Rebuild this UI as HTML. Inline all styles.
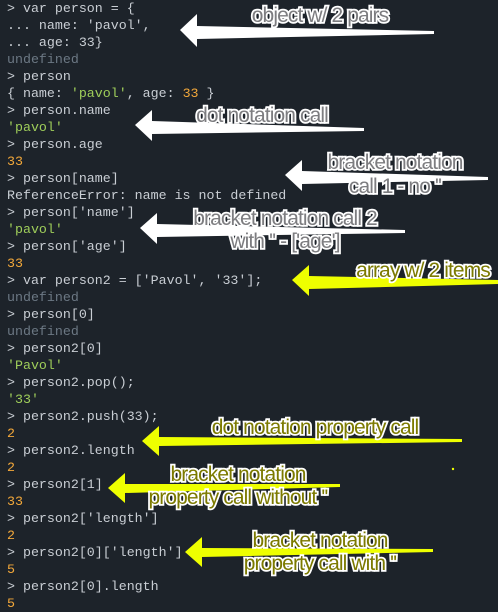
<!DOCTYPE html>
<html><head><meta charset="utf-8"><style>
html,body{margin:0;padding:0;background:#1d232a;width:498px;height:609px;overflow:hidden}
pre{margin:0;position:absolute;left:7px;top:0;font-family:"Liberation Mono",monospace;font-size:13.3px;line-height:17px;color:#c9ced4;white-space:pre}
.u{color:#6c7884}.g{color:#9fce5a}.o{color:#f3a83a}
svg{position:absolute;left:0;top:0}
.w{font-family:"Liberation Sans",sans-serif;font-size:21px;fill:#7d7d80;stroke:#fff;stroke-width:3.5px;paint-order:stroke;letter-spacing:-0.9px;text-anchor:middle}
.y{fill:#7c7a00}
</style></head><body>
<pre>&gt; var person = {
... name: 'pavol',
... age: 33}
<span class="u">undefined</span>
&gt; person
{ name: <span class="g">'pavol'</span>, age: <span class="o">33</span> }
&gt; person.name
<span class="g">'pavol'</span>
&gt; person.age
<span class="o">33</span>
&gt; person[name]
ReferenceError: name is not defined
&gt; person['name']
<span class="g">'pavol'</span>
&gt; person['age']
<span class="o">33</span>
&gt; var person2 = ['Pavol', '33'];
<span class="u">undefined</span>
&gt; person[0]
<span class="u">undefined</span>
&gt; person2[0]
<span class="g">'Pavol'</span>
&gt; person2.pop();
<span class="g">'33'</span>
&gt; person2.push(33);
<span class="o">2</span>
&gt; person2.length
<span class="o">2</span>
&gt; person2[1]
<span class="o">33</span>
&gt; person2['length']
<span class="o">2</span>
&gt; person2[0]['length']
<span class="o">5</span>
&gt; person2[0].length
<span class="o">5</span></pre>
<svg width="498" height="609">
<g fill="#fff">
<polygon points="180,30 197,14 197,26 434,31 434,34 197,39 197,47"/>
<polygon points="135,125 152,110 152,121 364,128 364,131 152,134 152,141"/>
<polygon points="285,175 302,160 302,171 488,177 488,180 302,184 302,191"/>
<polygon points="140,228 157,213 157,224 405,230 405,233 157,237 157,244"/>
</g>
<g fill="#eeff00">
<polygon points="292,280 309,265 309,276 498,280 498,284 309,289 309,296"/>
<polygon points="142,441 159,426 159,437 462,439 462,442 159,446 159,456"/>
<polygon points="108,488 125,473 125,484 340,484 340,487 125,493 125,503"/>
<polygon points="185,552 202,537 202,548 433,549 433,552 202,557 202,567"/>
<circle cx="453" cy="469" r="1.2"/>
</g>
<text class="w" x="320" y="22">object w/ 2 pairs</text>
<text class="w" x="262" y="122">dot notation call</text>
<text class="w" x="395" y="169">bracket notation</text>
<text class="w" x="395" y="193">call 1 - no ''</text>
<text class="w" x="285" y="225">bracket notation call 2</text>
<text class="w" x="285" y="248">with '' - ['age']</text>
<text class="w y" x="423" y="277">array w/ 2 items</text>
<text class="w y" x="315" y="434">dot notation property call</text>
<text class="w y" x="238" y="481">bracket notation</text>
<text class="w y" x="238" y="504">property call without ''</text>
<text class="w y" x="320" y="547">bracket notation</text>
<text class="w y" x="320" y="570">property call with ''</text>
</svg>
</body></html>
